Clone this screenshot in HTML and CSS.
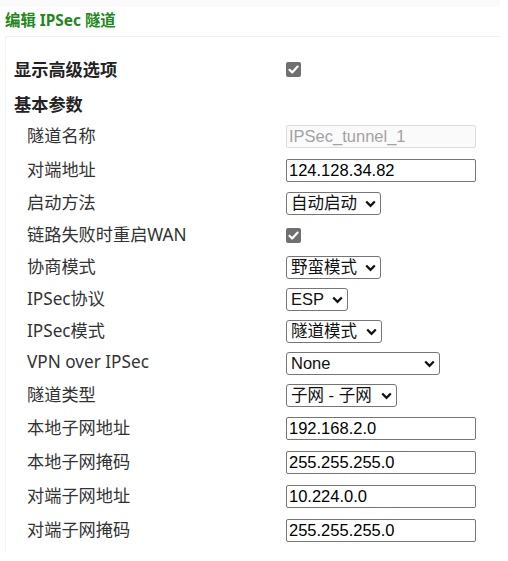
FILE: index.html
```html
<!DOCTYPE html>
<html lang="zh-CN">
<head>
  <meta charset="UTF-8">
  <title>编辑 IPSec 隧道</title>
  <link rel="stylesheet" href="styles.css">
</head>
<body>
  <div class="topband"></div>
  <h2 class="title">编辑 IPSec 隧道</h2>

  <div class="panel">
    <!-- advanced toggle -->
    <div class="row head-row first">
      <span class="heading">显示高级选项</span>
      <span class="check"><svg viewBox="0 0 15 15" width="15" height="15"><path d="M3.5 7.8 L6.2 10.4 L11.6 4.6" fill="none" stroke="#fff" stroke-width="2.2" stroke-linecap="round" stroke-linejoin="round"/></svg></span>
    </div>
    <div class="row head-row">
      <span class="heading">基本参数</span>
    </div>

    <!-- basic params -->
    <div class="row tall">
      <label class="lbl">隧道名称</label>
      <input class="txt" type="text" value="IPSec_tunnel_1" disabled>
    </div>
    <div class="row tall">
      <label class="lbl">对端地址</label>
      <input class="txt" type="text" value="124.128.34.82">
    </div>
    <div class="row">
      <label class="lbl">启动方法</label>
      <span class="sel w-95"><select><option>自动启动</option></select><svg class="chev" viewBox="0 0 11 8" width="11" height="8"><path d="M1.2 1.5 L5.5 5.8 L9.8 1.5" fill="none" stroke="#111" stroke-width="2.3"/></svg></span>
    </div>
    <div class="row">
      <label class="lbl">链路失败时重启WAN</label>
      <span class="check"><svg viewBox="0 0 15 15" width="15" height="15"><path d="M3.5 7.8 L6.2 10.4 L11.6 4.6" fill="none" stroke="#fff" stroke-width="2.2" stroke-linecap="round" stroke-linejoin="round"/></svg></span>
    </div>
    <div class="row">
      <label class="lbl">协商模式</label>
      <span class="sel w-95"><select><option>野蛮模式</option></select><svg class="chev" viewBox="0 0 11 8" width="11" height="8"><path d="M1.2 1.5 L5.5 5.8 L9.8 1.5" fill="none" stroke="#111" stroke-width="2.3"/></svg></span>
    </div>
    <div class="row">
      <label class="lbl">IPSec协议</label>
      <span class="sel w-62"><select><option>ESP</option></select><svg class="chev" viewBox="0 0 11 8" width="11" height="8"><path d="M1.2 1.5 L5.5 5.8 L9.8 1.5" fill="none" stroke="#111" stroke-width="2.3"/></svg></span>
    </div>
    <div class="row">
      <label class="lbl">IPSec模式</label>
      <span class="sel w-96"><select><option>隧道模式</option></select><svg class="chev" viewBox="0 0 11 8" width="11" height="8"><path d="M1.2 1.5 L5.5 5.8 L9.8 1.5" fill="none" stroke="#111" stroke-width="2.3"/></svg></span>
    </div>
    <div class="row">
      <label class="lbl">VPN over IPSec</label>
      <span class="sel w-154"><select><option>None</option></select><svg class="chev" viewBox="0 0 11 8" width="11" height="8"><path d="M1.2 1.5 L5.5 5.8 L9.8 1.5" fill="none" stroke="#111" stroke-width="2.3"/></svg></span>
    </div>
    <div class="row">
      <label class="lbl">隧道类型</label>
      <span class="sel w-111"><select><option>子网 - 子网</option></select><svg class="chev" viewBox="0 0 11 8" width="11" height="8"><path d="M1.2 1.5 L5.5 5.8 L9.8 1.5" fill="none" stroke="#111" stroke-width="2.3"/></svg></span>
    </div>
    <div class="row tall">
      <label class="lbl">本地子网地址</label>
      <input class="txt" type="text" value="192.168.2.0">
    </div>
    <div class="row tall">
      <label class="lbl">本地子网掩码</label>
      <input class="txt" type="text" value="255.255.255.0">
    </div>
    <div class="row tall">
      <label class="lbl">对端子网地址</label>
      <input class="txt" type="text" value="10.224.0.0">
    </div>
    <div class="row tall">
      <label class="lbl">对端子网掩码</label>
      <input class="txt" type="text" value="255.255.255.0">
    </div>
  </div>
</body>
</html>
```

FILE: styles.css
```css
body {
  margin: 0;
  background: #fff;
  color: #333;
  font-family: "Noto Sans", "Noto Sans CJK SC", sans-serif;
  width: 508px;
}
.topband {
  height: 7px;
  width: 500px;
  background: #fafafa;
}
.title {
  margin: 0;
  padding: 4px 0 0 5px;
  height: 25px;
  font-size: 15.4px;
  font-weight: bold;
  line-height: 20px;
  color: #23881a;
}
.panel {
  margin-left: 5px;
  width: 494px;
  border-top: 1px solid #f0f0f0;
  border-left: 1px solid #f3f3f3;
  padding-top: 12px;
  padding-bottom: 5px;
}
.row {
  display: grid;
  grid-template-columns: 280px auto;
  align-items: center;
  height: 32px;
}
.row.tall {
  height: 34px;
}
.head-row {
  height: 30px;
}
.head-row.first {
  height: 40px;
}
.heading {
  padding-left: 8px;
  padding-bottom: 2px;
  font-size: 17.2px;
  font-weight: bold;
  color: #222;
}
.lbl {
  padding-left: 21px;
  padding-bottom: 3px;
  font-size: 17.2px;
  color: #333;
  white-space: nowrap;
}
.check {
  display: inline-block;
  width: 15px;
  height: 15px;
  background: #707070;
  border-radius: 2px;
}
.check svg {
  display: block;
}
.txt {
  box-sizing: border-box;
  width: 190px;
  height: 23px;
  padding: 0 2px;
  border: 1px solid #767676;
  border-radius: 2px;
  font-family: "Liberation Sans", "Noto Sans CJK SC", sans-serif;
  font-size: 16.5px;
  color: #000;
  background: #fff;
}
.txt:disabled {
  background: #fafafa;
  border-color: #dcdcdc;
  color: #a3a3a3;
}
.sel {
  position: relative;
  display: inline-block;
  height: 23px;
}
.sel select {
  appearance: none;
  -webkit-appearance: none;
  box-sizing: border-box;
  width: 100%;
  height: 23px;
  margin: 0;
  padding: 0 20px 0 4px;
  border: 1px solid #767676;
  border-radius: 3px;
  background: #fff;
  color: #111;
  font-family: "Liberation Sans", "Noto Sans CJK SC", sans-serif;
  font-size: 16.5px;
  line-height: 21px;
}
.sel .chev {
  position: absolute;
  right: 5px;
  top: 8px;
  pointer-events: none;
}
.w-62 { width: 62px; }
.w-95 { width: 95px; }
.w-96 { width: 96px; }
.w-111 { width: 111px; }
.w-154 { width: 154px; }
```
